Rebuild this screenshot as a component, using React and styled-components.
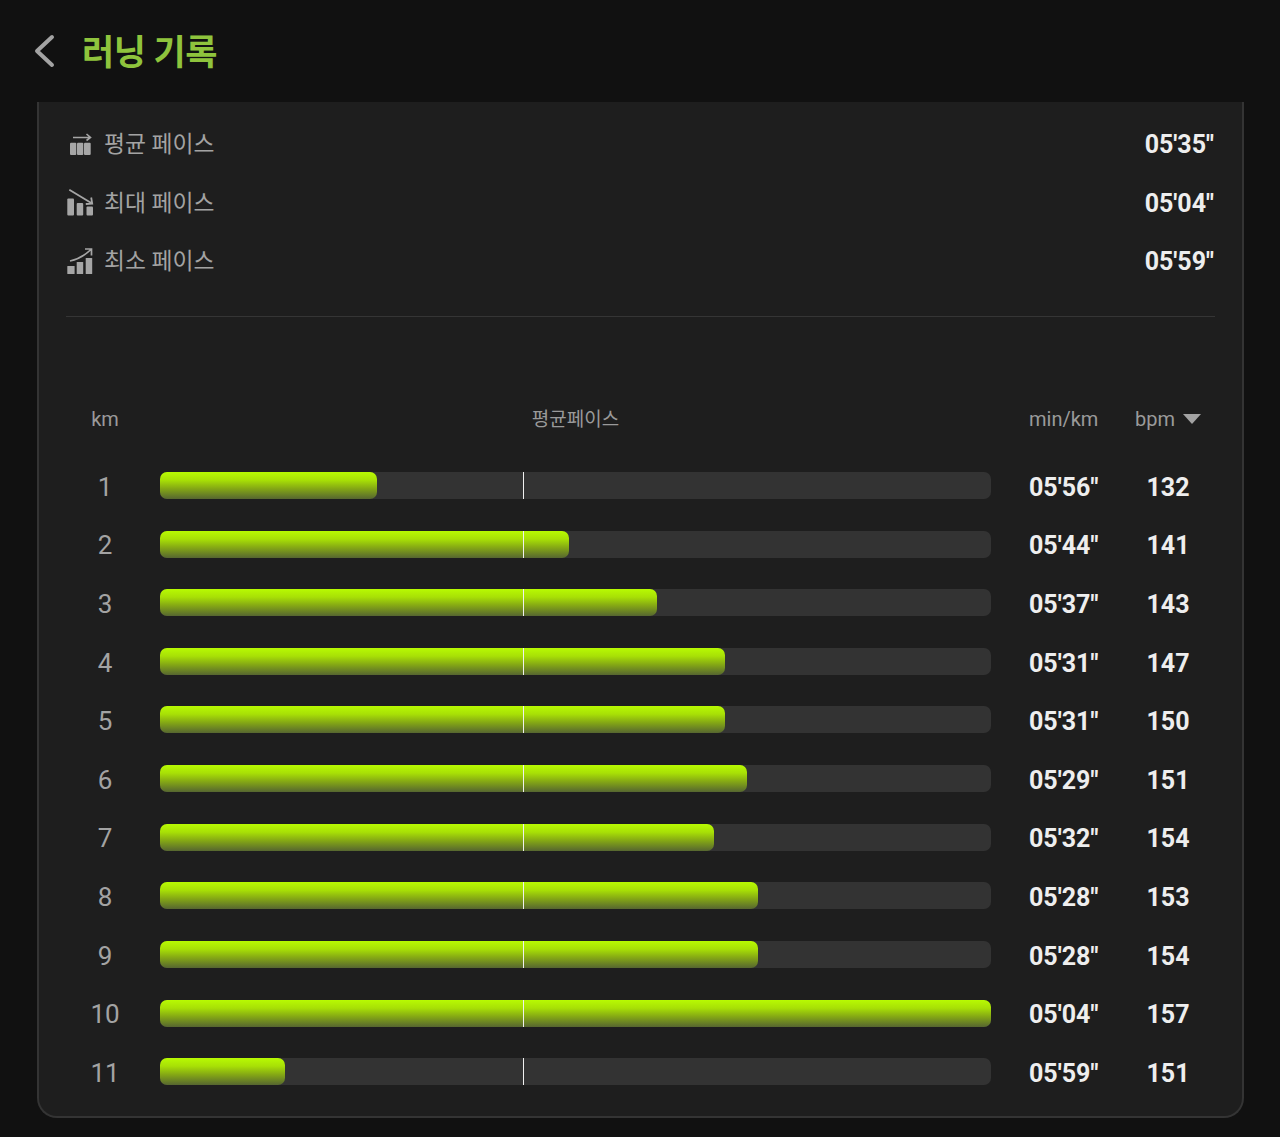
import React from 'react'
import styled, { createGlobalStyle } from 'styled-components'

const GlobalStyle = createGlobalStyle`
    html, body {
        margin: 0;
        padding: 0;
        background-color: #111111;
    }
    * {
        box-sizing: border-box;
    }
`

const Page = styled.div`
    width: 1280px;
    height: 1137px;
    background-color: #111111;
    font-family: Roboto, 'Noto Sans CJK KR', sans-serif;
    overflow: hidden;
`

const Header = styled.header`
    display: flex;
    align-items: center;
    height: 102px;
    padding-left: 33px;
    background-color: #111111;
`

const BackButton = styled.svg`
    width: 22px;
    height: 34px;
    margin-right: 27px;
    display: block;
`

const Title = styled.h1`
    margin: 0 0 3px;
    font-size: 35px;
    font-weight: 700;
    color: #8fc43d;
    letter-spacing: -0.5px;
`

const Panel = styled.section`
    width: 1207px;
    height: 1016px;
    margin-left: 37px;
    padding: 13.4px 27px 0;
    background-color: #1e1e1e;
    border: 2px solid #343434;
    border-top: 0;
    border-radius: 0 0 20px 20px;
`

const StatRow = styled.div`
    display: flex;
    align-items: center;
    justify-content: space-between;
    height: 58.6px;
`

const StatLabel = styled.div`
    display: flex;
    align-items: center;
    gap: 8px;
    font-size: 22.8px;
    color: #a3a3a3;
`

const StatText = styled.span`
    margin-bottom: 4px;
`

const StatIcon = styled.svg`
    width: 30px;
    height: 30px;
    display: block;
    fill: #a6a6a6;
    stroke: #a6a6a6;
`

const StatValue = styled.div`
    padding-right: 1px;
    font-size: 25px;
    font-weight: 700;
    color: #eeeeee;
`

const Divider = styled.hr`
    height: 1px;
    margin: 24.6px 0 0;
    border: 0;
    background-color: #353535;
`

const Table = styled.div`
    margin-top: 72px;
`

const HeadRow = styled.div`
    display: grid;
    grid-template-columns: 78px 831px 106px 78px;
    column-gap: 16px;
    align-items: center;
    height: 60px;
    font-size: 20px;
    color: #9a9a9a;
    margin-bottom: 8px;
`

const DataRow = styled.div`
    display: grid;
    grid-template-columns: 78px 831px 106px 78px;
    column-gap: 16px;
    align-items: center;
    height: 58.65px;
`

const HeadCell = styled.div`
    text-align: ${({ align }) => align || 'center'};
    padding-left: ${({ inset }) => inset || 0}px;
    padding-bottom: ${({ lift }) => lift || 0}px;
    font-size: ${({ size }) => size || 20}px;
    white-space: nowrap;
`

const SortArrow = styled.span`
    display: inline-block;
    width: 0;
    height: 0;
    margin-left: 8px;
    vertical-align: 2px;
    border-left: 9px solid transparent;
    border-right: 9px solid transparent;
    border-top: 10px solid #a3a3a3;
`

const KmCell = styled.div`
    padding-top: 1px;
    font-size: 26px;
    color: #a3a3a3;
    text-align: center;
`

const Track = styled.div`
    position: relative;
    height: 27px;
    margin-bottom: 1.4px;
    border-radius: 7px;
    background-color: #333333;
`

const Fill = styled.div`
    height: 100%;
    border-radius: 7px;
    background: linear-gradient(to bottom, #b8fa02 0%, #a8e006 30%, #86aa14 60%, #566630 100%);
`

const AvgMark = styled.div`
    position: absolute;
    top: 0;
    bottom: 0;
    left: 363px;
    width: 1px;
    background-color: #f0f0f0;
`

const PaceCell = styled.div`
    margin-left: 22px;
    padding-top: 2px;
    font-size: 25px;
    font-weight: 700;
    color: #eeeeee;
    white-space: nowrap;
`

const BpmCell = styled.div`
    padding-top: 2px;
    font-size: 25px;
    font-weight: 700;
    color: #eeeeee;
    text-align: center;
`

const laps = [
    { km: 1, width: 217, pace: `05'56"`, bpm: 132 },
    { km: 2, width: 409, pace: `05'44"`, bpm: 141 },
    { km: 3, width: 497, pace: `05'37"`, bpm: 143 },
    { km: 4, width: 565, pace: `05'31"`, bpm: 147 },
    { km: 5, width: 565, pace: `05'31"`, bpm: 150 },
    { km: 6, width: 587, pace: `05'29"`, bpm: 151 },
    { km: 7, width: 554, pace: `05'32"`, bpm: 154 },
    { km: 8, width: 597.5, pace: `05'28"`, bpm: 153 },
    { km: 9, width: 597.5, pace: `05'28"`, bpm: 154 },
    { km: 10, width: 831, pace: `05'04"`, bpm: 157 },
    { km: 11, width: 124.5, pace: `05'59"`, bpm: 151 },
]

const AvgIcon = () => (
    <StatIcon viewBox="0 0 30 30">
        <rect x="4" y="12.7" width="6.3" height="12.3" rx="1" stroke="none" />
        <rect x="11" y="12.7" width="6.3" height="12.3" rx="1" stroke="none" />
        <rect x="18" y="12.7" width="6.7" height="12.3" rx="1" stroke="none" />
        <path d="M7 7.5H24M20.5 4L24.5 7.5L20.5 10.5" fill="none" strokeWidth="1.6" />
    </StatIcon>
)

const MaxIcon = () => (
    <StatIcon viewBox="0 0 30 30">
        <rect x="1.3" y="10.5" width="6.7" height="17" rx="1" stroke="none" />
        <rect x="10.7" y="15" width="6.5" height="12.5" rx="1" stroke="none" />
        <rect x="20.5" y="18.4" width="6.5" height="9" rx="1" stroke="none" />
        <path d="M3.3 1.7L25.7 15.2M25.2 9.5L26.2 15.7L19.8 16" fill="none" strokeWidth="1.8" />
    </StatIcon>
)

const MinIcon = () => (
    <StatIcon viewBox="0 0 30 30">
        <rect x="1.3" y="19" width="7.3" height="8" rx="0.5" stroke="none" />
        <rect x="10.7" y="15" width="6.5" height="12" rx="0.5" stroke="none" />
        <rect x="19.7" y="11" width="6.5" height="16" rx="0.5" stroke="none" />
        <path d="M4 14C12 12.5 18 9 25 2.5M19 2H25.5V8.5" fill="none" strokeWidth="1.7" />
    </StatIcon>
)

const stats = [
    { label: '평균 페이스', value: `05'35"`, Icon: AvgIcon },
    { label: '최대 페이스', value: `05'04"`, Icon: MaxIcon },
    { label: '최소 페이스', value: `05'59"`, Icon: MinIcon },
]

export default function App() {
    return (
        <Page>
            <GlobalStyle />
            <Header>
                <BackButton viewBox="0 0 22 34">
                    <path d="M19 3L4 17L19 31" fill="none" stroke="#a3a3a3" strokeWidth="4" strokeLinecap="round" strokeLinejoin="round" />
                </BackButton>
                <Title>러닝 기록</Title>
            </Header>
            <Panel>
                {stats.map(({ label, value, Icon }) => (
                    <StatRow key={label}>
                        <StatLabel>
                            <Icon />
                            <StatText>{label}</StatText>
                        </StatLabel>
                        <StatValue>{value}</StatValue>
                    </StatRow>
                ))}
                <Divider />
                <Table>
                    <HeadRow>
                        <HeadCell>km</HeadCell>
                        <HeadCell size={19} lift={2}>평균페이스</HeadCell>
                        <HeadCell align="left" inset={22}>min/km</HeadCell>
                        <HeadCell>
                            bpm
                            <SortArrow />
                        </HeadCell>
                    </HeadRow>
                    {laps.map((lap) => (
                        <DataRow key={lap.km}>
                            <KmCell>{lap.km}</KmCell>
                            <Track>
                                <Fill style={{ width: lap.width }} />
                                <AvgMark />
                            </Track>
                            <PaceCell>{lap.pace}</PaceCell>
                            <BpmCell>{lap.bpm}</BpmCell>
                        </DataRow>
                    ))}
                </Table>
            </Panel>
        </Page>
    )
}
